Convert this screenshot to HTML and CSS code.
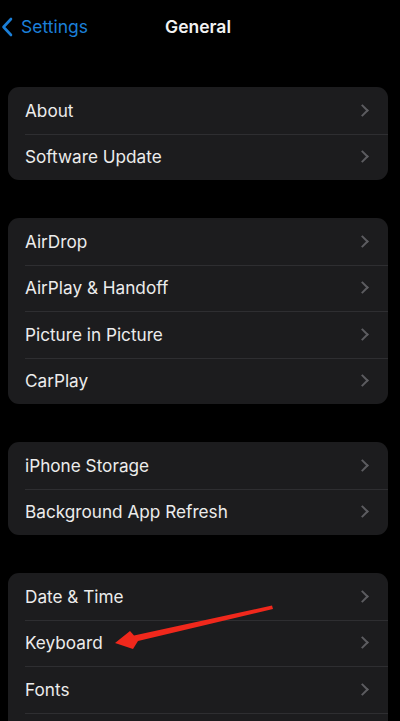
FILE: index.html
```html
<!DOCTYPE html>
<html lang="en">
<head>
    <meta charset="UTF-8">
    <meta name="viewport" content="width=device-width, initial-scale=1.0">
    <title>General</title>
    <link rel="stylesheet" href="styles.css">
</head>
<body>
    <div class="screen">
        <div class="nav">
            <div class="back">
                <svg class="back-icon" width="12" height="20" viewBox="0 0 12 20"><path d="M10 2 L2.5 10 L10 18" fill="none" stroke="#1b7fd8" stroke-width="2.6" stroke-linecap="round" stroke-linejoin="round"/></svg>
                <span>Settings</span>
            </div>
            <div class="title">General</div>
        </div>

        <div class="group">
            <div class="row"><span>About</span><i class="chev"></i></div>
            <div class="row"><span>Software Update</span><i class="chev"></i></div>
        </div>

        <div class="group">
            <div class="row"><span>AirDrop</span><i class="chev"></i></div>
            <div class="row"><span>AirPlay &amp; Handoff</span><i class="chev"></i></div>
            <div class="row"><span>Picture in Picture</span><i class="chev"></i></div>
            <div class="row"><span>CarPlay</span><i class="chev"></i></div>
        </div>

        <div class="group">
            <div class="row"><span>iPhone Storage</span><i class="chev"></i></div>
            <div class="row"><span>Background App Refresh</span><i class="chev"></i></div>
        </div>

        <div class="group">
            <div class="row"><span>Date &amp; Time</span><i class="chev"></i></div>
            <div class="row"><span>Keyboard</span><i class="chev"></i></div>
            <div class="row"><span>Fonts</span><i class="chev"></i></div>
            <div class="row"></div>
        </div>

        <!-- red annotation arrow pointing at Keyboard -->
        <svg class="arrow" width="400" height="721" viewBox="0 0 400 721">
            <polygon points="272,605.5 273,609 138,641 133,649 115,643 130,631 134,635.5" fill="#f0281c"/>
        </svg>
    </div>
</body>
</html>
```

FILE: styles.css
```css
body {
    margin: 0;
    background: #000;
    font-family: Inter, "Noto Sans", sans-serif;
    color: #ececec;
}

.screen {
    position: relative;
    width: 400px;
    height: 721px;
    overflow: hidden;
    padding: 0 12px 0 8px;
    box-sizing: border-box;
}

.nav {
    position: relative;
    height: 52px;
    display: flex;
    align-items: center;
    justify-content: center;
    margin: 0 -12px 35px -8px;
}

.back {
    position: absolute;
    left: 1px;
    top: 16px;
    display: flex;
    align-items: center;
    gap: 8px;
    color: #1b7fd8;
    font-size: 17.5px;
}

.title {
    font-size: 17.5px;
    font-weight: 600;
    color: #f2f2f2;
    margin-left: -4px;
}

.group {
    background: #1c1c1e;
    border-radius: 11px;
    margin-bottom: 38px;
}

.row {
    height: 46.5px;
    display: flex;
    align-items: center;
    justify-content: space-between;
    padding: 0 19px 0 17px;
    font-size: 17.2px;
    position: relative;
}

.row + .row::before {
    content: "";
    position: absolute;
    left: 17px;
    right: 0;
    top: 0;
    height: 1px;
    background: #2e2e31;
}

.chev {
    width: 7px;
    height: 7px;
    border-right: 2px solid #5c5c60;
    border-top: 2px solid #5c5c60;
    transform: rotate(45deg);
    margin-right: 2px;
}

.arrow {
    position: absolute;
    left: 0;
    top: 0;
}
```
